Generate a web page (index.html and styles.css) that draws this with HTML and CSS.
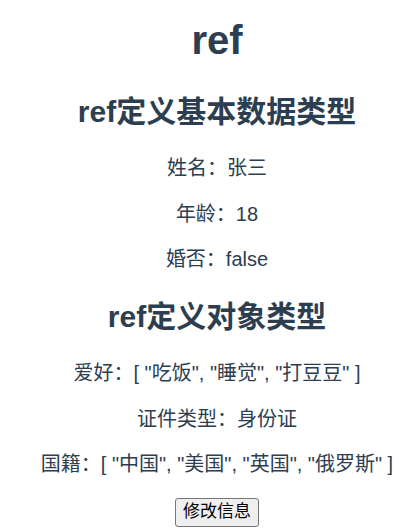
FILE: index.html
```html
<!DOCTYPE html>
<html lang="zh-CN">
<head>
<meta charset="utf-8">
<title>ref</title>
<link rel="stylesheet" href="styles.css">
</head>
<body>
<div class="app">
  <h1 class="title">ref</h1>
  <h2 class="sub">ref定义基本数据类型</h2>
  <p class="line">姓名：张三</p>
  <p class="line">年龄：18</p>
  <p class="line">婚否：false</p>
  <h2 class="sub">ref定义对象类型</h2>
  <p class="line">爱好：[ "吃饭", "睡觉", "打豆豆" ]</p>
  <p class="line">证件类型：身份证</p>
  <p class="line">国籍：[ "中国", "美国", "英国", "俄罗斯" ]</p>
  <button class="btn" type="button">修改信息</button>
</div>
</body>
</html>
```
FILE: styles.css
```css
html, body {
  margin: 0;
  padding: 0;
  background: #ffffff;
}
body {
  padding: 14px 10px 0 37px;
  overflow: hidden;
}
.app {
  font-family: "Liberation Sans", "Noto Sans CJK SC", sans-serif;
  text-align: center;
  color: #2c3e50;
}
.title {
  font-size: 40px;
  line-height: 1.3;
  font-weight: bold;
  margin: 0 0 26px;
}
.sub {
  font-size: 30px;
  line-height: 1.32;
  font-weight: bold;
  margin: 24.5px 0;
}
.line {
  font-size: 20px;
  line-height: 25.5px;
  margin: 20px 0;
}
.btn {
  font-family: "Liberation Sans", "Noto Sans CJK SC", sans-serif;
  font-size: 17px;
  line-height: 1.3;
  color: #000;
  background: #efefef;
  border: 1px solid #767676;
  border-radius: 3px;
  padding: 1px 7px;
  height: 29px;
}
```
